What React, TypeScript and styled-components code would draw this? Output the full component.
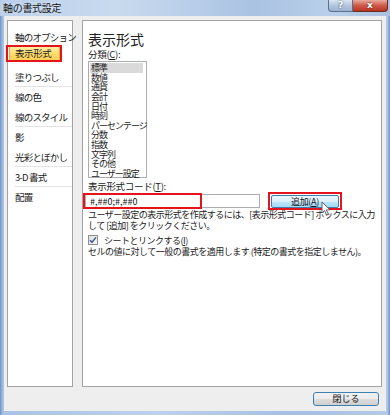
import React from 'react';
import styled, { createGlobalStyle } from 'styled-components';

const GlobalStyle = createGlobalStyle`
  html, body {
    margin: 0;
    padding: 0;
    background: #ffffff;
  }
  body {
    font-family: "Noto Sans CJK JP", "Liberation Sans", sans-serif;
    color: #1b1b1b;
  }
`;

type NavEntry = { label: string; sep?: boolean; selected?: boolean };

const navItems: NavEntry[] = [
  { label: '軸のオプション' },
  { label: '表示形式', selected: true },
  { label: '塗りつぶし' },
  { label: '線の色', sep: true },
  { label: '線のスタイル' },
  { label: '影', sep: true },
  { label: '光彩とぼかし' },
  { label: '3-D 書式', sep: true },
  { label: '配置', sep: true },
];

const categories = [
  '標準', '数値', '通貨', '会計', '日付', '時刻',
  'パーセンテージ', '分数', '指数', '文字列', 'その他', 'ユーザー設定',
];

const App: React.FC = () => (
  <>
    <GlobalStyle />
    <Window>
      <TitleBar>
        <TitleText>軸の書式設定</TitleText>
        <CaptionButtons>
          <HelpButton>?</HelpButton>
          <CloseCaption>x</CloseCaption>
        </CaptionButtons>
      </TitleBar>
      <Body>
        <Panels>
          <NavPanel>
            {navItems.map((item) => (
              <NavItem key={item.label} $sep={item.sep}>
                {item.selected ? (
                  <Highlight>
                    {item.label}
                    <RedMark $t={-2} $r={-3} $b={-2} $l={-4} />
                  </Highlight>
                ) : (
                  item.label
                )}
              </NavItem>
            ))}
          </NavPanel>
          <ContentPanel>
            <Heading>表示形式</Heading>
            <Label>
              分類(<u>C</u>):
            </Label>
            <ListBox>
              {categories.map((c, i) => (
                <ListItem key={c} $selected={i === 0}>
                  {c}
                </ListItem>
              ))}
            </ListBox>
            <CodeLabel>
              表示形式コード(<u>T</u>):
            </CodeLabel>
            <InputRow>
              <InputWrap>
                <CodeInput defaultValue="#,##0;#,##0" />
                <RedMark $t={-1} $l={-2} $b={-1} $w={119} />
              </InputWrap>
              <ButtonWrap>
                <AddButton>
                  追加(<u>A</u>)
                </AddButton>
                <RedMark $t={-3} $r={-3} $b={-2} $l={-3} />
                <Cursor width="12" height="15" viewBox="0 0 12 15">
                  <path
                    d="M1 1 L1 12 L3.6 9.6 L5.6 14 L7.4 13.2 L5.4 8.9 L9 8.9 Z"
                    fill="#ffffff"
                    stroke="#555"
                    strokeWidth="0.9"
                    strokeLinejoin="round"
                  />
                </Cursor>
              </ButtonWrap>
            </InputRow>
            <Note>
              ユーザー設定の表示形式を作成するには、[表示形式コード] ボックスに入力
              <br />
              して [追加] をクリックください。
            </Note>
            <CheckRow>
              <CheckBox>
                <svg width="8" height="8" viewBox="0 0 8 8">
                  <path d="M1 4.2 L3 6.3 L7 1.4" fill="none" stroke="#3d5a9a" strokeWidth="1.5" />
                </svg>
              </CheckBox>
              <span>
                シートとリンクする(<u>I</u>)
              </span>
            </CheckRow>
            <Note>セルの値に対して一般の書式を適用します (特定の書式を指定しません)。</Note>
          </ContentPanel>
        </Panels>
        <Footer>
          <CloseButton>閉じる</CloseButton>
        </Footer>
      </Body>
    </Window>
  </>
);

const Window = styled.div`
  width: 390px;
  height: 415px;
  display: flex;
  flex-direction: column;
  background: linear-gradient(90deg, #6f93c8 0, #a9c3e5 3px, #bcd1ec 40%, #a6bfe2 75%, #b4cae8 calc(100% - 3px), #6f93c8 100%);
  overflow: hidden;
`;

const TitleBar = styled.div`
  height: 16px;
  display: flex;
  justify-content: space-between;
  background: linear-gradient(90deg, #b8cfea 0, #c9daee 30%, #aac3e3 65%, #b9cfe9 85%, #a9c1e1 100%);
`;

const TitleText = styled.span`
  padding: 2px 0 0 3px;
  font-size: 10px;
  line-height: 12px;
  letter-spacing: -0.3px;
  color: #111;
  text-shadow: 0 0 4px #eaf2fb;
`;

const CaptionButtons = styled.div`
  display: flex;
  align-self: flex-start;
  margin-right: 2px;
`;

const HelpButton = styled.div`
  width: 25px;
  height: 12px;
  box-sizing: border-box;
  border: 1px solid #5a6e8e;
  border-top: none;
  border-radius: 0 0 0 4px;
  background: linear-gradient(#dbe5f1, #b3c5dd 50%, #9fb4d2);
  color: #fff;
  font: bold 9px/11px "DejaVu Sans", sans-serif;
  text-align: center;
  text-shadow: 0 0 2px #2b3b55;
`;

const CloseCaption = styled.div`
  width: 35px;
  height: 12px;
  box-sizing: border-box;
  border: 1px solid #6b2a22;
  border-left: none;
  border-top: none;
  border-radius: 0 0 4px 0;
  background: linear-gradient(#e8aaa0, #cf5a4a 50%, #b8321f);
  color: #fff;
  font: bold 9px/10px "DejaVu Sans", sans-serif;
  text-align: center;
  text-shadow: 0 0 2px #5a1408;
`;

const Body = styled.div`
  flex: 1;
  display: flex;
  flex-direction: column;
  margin: 0 4px 4px 4px;
  padding: 4px 4px 0 3px;
  background: #eeeeee;
`;

const Panels = styled.div`
  flex: 1;
  display: flex;
  gap: 9px;
`;

const NavPanel = styled.div`
  width: 66px;
  box-sizing: border-box;
  padding-top: 5px;
  background: #ffffff;
  border: 1px solid #a3a3a3;
`;

const NavItem = styled.div<{ $sep?: boolean }>`
  height: 20px;
  box-sizing: border-box;
  margin-left: 7px;
  display: flex;
  align-items: center;
  border-top: 1px solid ${(p) => (p.$sep ? '#e3e3e3' : 'transparent')};
  font-size: 9.5px;
  letter-spacing: -0.8px;
  white-space: nowrap;
`;

const Highlight = styled.span`
  position: relative;
  display: block;
  align-self: flex-start;
  margin: -1px 0 0 -6px;
  padding-left: 5px;
  width: 51px;
  height: 15px;
  box-sizing: border-box;
  line-height: 13px;
  letter-spacing: -0.4px;
  background: linear-gradient(#ffeea6, #ffd966 60%, #fdd055);
  border: 1px solid #e0b048;
  border-radius: 2px;
`;

const RedMark = styled.span<{ $t?: number; $r?: number; $b?: number; $l?: number; $w?: number }>`
  position: absolute;
  top: ${(p) => p.$t ?? 0}px;
  bottom: ${(p) => p.$b ?? 0}px;
  left: ${(p) => p.$l ?? 0}px;
  ${(p) => (p.$w ? `width: ${p.$w}px;` : `right: ${p.$r ?? 0}px;`)}
  box-sizing: border-box;
  border: 2px solid #e5141c;
  pointer-events: none;
`;

const ContentPanel = styled.div`
  flex: 1;
  display: flex;
  flex-direction: column;
  align-items: flex-start;
  padding-left: 5px;
  background: #ffffff;
  border: 1px solid #a3a3a3;
`;

const Heading = styled.div`
  margin-top: 9px;
  font-size: 14px;
  line-height: 18px;
  color: #222;
`;

const Label = styled.div`
  font-size: 9.5px;
  line-height: 12px;
  letter-spacing: -0.3px;
`;

const CodeLabel = styled(Label)`
  margin-top: 2px;
`;

const ListBox = styled.div`
  margin-top: 1px;
  width: 59px;
  height: 117px;
  box-sizing: border-box;
  padding: 1px 3px 0 1px;
  border: 1px solid #a8acb3;
  background: #fff;
`;

const ListItem = styled.div<{ $selected?: boolean }>`
  height: 9.64px;
  padding-left: 1px;
  font-size: 9px;
  line-height: 9.64px;
  letter-spacing: -1px;
  white-space: nowrap;
  background: ${(p) => (p.$selected ? '#dadada' : 'transparent')};
`;

const InputRow = styled.div`
  display: flex;
  align-items: center;
  height: 18px;
`;

const InputWrap = styled.div`
  position: relative;
  display: flex;
  margin-left: -3px;
`;

const CodeInput = styled.input`
  width: 175px;
  height: 14px;
  box-sizing: border-box;
  padding: 0 0 0 4px;
  border: 1px solid #abadb3;
  outline: none;
  font-family: "Noto Sans CJK JP", "Liberation Sans", sans-serif;
  font-size: 9px;
  color: #111;
`;

const ButtonWrap = styled.div`
  position: relative;
  display: flex;
  margin-left: 11px;
`;

const AddButton = styled.button`
  width: 68px;
  height: 13px;
  padding: 0;
  box-sizing: border-box;
  border: 1px solid #3c7fb1;
  border-radius: 2px;
  background: linear-gradient(#eaf6fd, #d9f0fc 50%, #bee6fd 51%, #a7d9f5);
  font-family: "Noto Sans CJK JP", "Liberation Sans", sans-serif;
  font-size: 9px;
  line-height: 11px;
  letter-spacing: -0.3px;
  color: #111;
`;

const Cursor = styled.svg`
  position: absolute;
  left: 50px;
  top: 6px;
`;

const Note = styled.div`
  font-size: 9px;
  line-height: 10.5px;
  letter-spacing: -0.5px;
  white-space: nowrap;
  color: #1b1b1b;
`;

const CheckRow = styled.div`
  display: flex;
  align-items: center;
  gap: 6px;
  margin-top: 2px;
  height: 14px;
  font-size: 9px;
  letter-spacing: -0.5px;
  white-space: nowrap;
`;

const CheckBox = styled.span`
  width: 10px;
  height: 10px;
  box-sizing: border-box;
  display: flex;
  align-items: center;
  justify-content: center;
  border: 1px solid #8e8f8f;
  background: linear-gradient(135deg, #dcdcdc, #fbfbfb);
`;

const Footer = styled.div`
  display: flex;
  justify-content: flex-end;
  padding: 5px 3px 5px 0;
`;

const CloseButton = styled.button`
  width: 66px;
  height: 14px;
  padding: 0;
  box-sizing: border-box;
  border: 1px solid #3c7fb1;
  border-radius: 3px;
  background: linear-gradient(#f2f2f2, #ebebeb 50%, #dddddd 51%, #cfcfcf);
  font-family: "Noto Sans CJK JP", "Liberation Sans", sans-serif;
  font-size: 9px;
  line-height: 12px;
  color: #111;
`;

export default App;
